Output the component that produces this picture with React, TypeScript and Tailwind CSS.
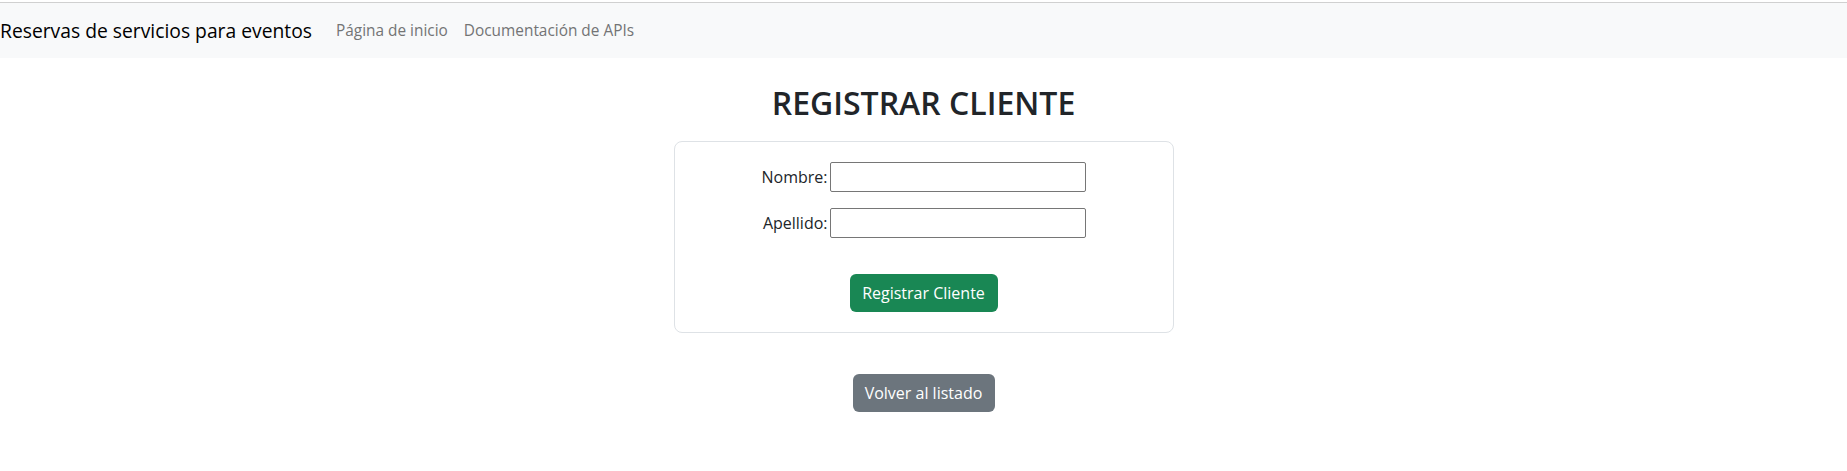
import React from "react";

export default function App() {
  const font = { fontFamily: '"Open Sans", "Noto Sans", sans-serif' };
  return (
    <div className="min-h-[471px] bg-white text-[#212529]" style={font}>
      <div className="pt-[2px]">
        <nav className="h-[56px] border-t border-[#d0d0d0] bg-[#f8f9fa] flex items-center">
          <span className="text-[19.3px] leading-[30px] text-black mr-[16px] whitespace-nowrap">
            Reservas de servicios para eventos
          </span>
          <a className="px-[8px] text-[15.4px] text-[#737475] whitespace-nowrap">Página de inicio</a>
          <a className="px-[8px] text-[15.4px] text-[#737475] whitespace-nowrap">Documentación de APIs</a>
        </nav>
      </div>
      <div className="flex flex-col items-center">
        <h2 className="mt-[26px] text-[32px] leading-[38px] font-semibold text-[#212529]">REGISTRAR CLIENTE</h2>
        <div className="mt-[19px] w-[500px] h-[192px] border border-[#dee2e6] rounded-[8px] flex flex-col items-center pt-[20px]">
          <div className="flex items-center gap-[2px]">
            <label className="w-[66px] text-right text-[16px] whitespace-nowrap">Nombre:</label>
            <input className="w-[256px] h-[30px] border border-[#767676] rounded-[2px] bg-white" />
          </div>
          <div className="flex items-center gap-[2px] mt-[16px]">
            <label className="w-[66px] text-right text-[16px] whitespace-nowrap">Apellido:</label>
            <input className="w-[256px] h-[30px] border border-[#767676] rounded-[2px] bg-white" />
          </div>
          <button className="mt-[36px] w-[148px] h-[38px] rounded-[6px] bg-[#198754] text-white text-[16px] whitespace-nowrap">
            Registrar Cliente
          </button>
        </div>
        <button className="mt-[41px] w-[142px] h-[38px] rounded-[6px] bg-[#6c757d] text-white text-[16px] whitespace-nowrap">
          Volver al listado
        </button>
      </div>
    </div>
  );
}
